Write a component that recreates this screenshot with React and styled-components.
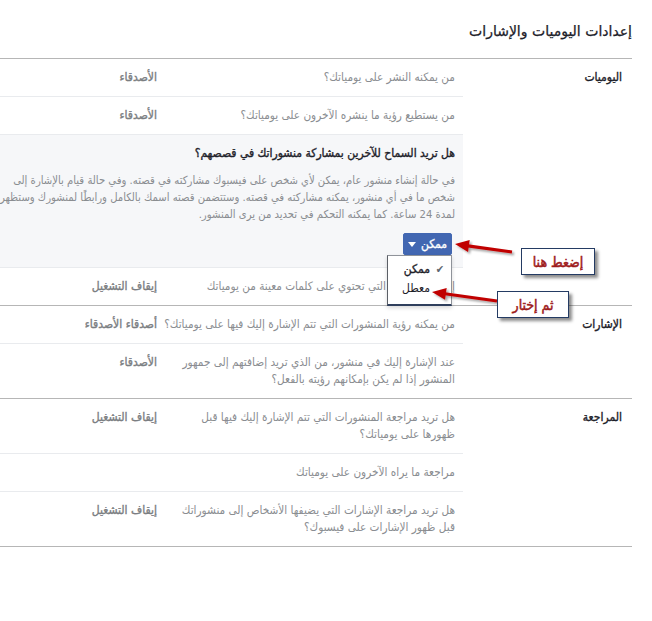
import React from "react";
import styled, { createGlobalStyle, css } from "styled-components";

const GlobalStyle = createGlobalStyle`
  html, body { margin: 0; padding: 0; background: #fff; }
  body {
    direction: rtl;
    font-family: "DejaVu Sans Condensed", "DejaVu Sans", sans-serif;
    font-size: 12px;
    color: #1d2129;
  }
`;

const fauxBold = css`
  font-weight: normal;
  -webkit-text-stroke: 0.35px currentColor;
`;

const Page = styled.div`
  position: relative;
  width: 652px;
  height: 621px;
  overflow: hidden;
  background: #fff;
`;

const Panel = styled.div`
  width: 690px;
  margin-right: 20px;
`;

const Header = styled.div`
  height: 59px;
  display: flex;
  align-items: center;
  padding-top: 3px;
  box-sizing: border-box;
  border-bottom: 1px solid #b6b6b6;
`;

const Title = styled.h2`
  margin: 0;
  font-family: "DejaVu Sans", sans-serif;
  font-size: 14px;
  font-weight: normal;
  -webkit-text-stroke: 0.25px currentColor;
  color: #1d2129;
`;

const Section = styled.div`
  display: flex;
  border-bottom: 1px solid #b6b6b6;
`;

const Label = styled.div`
  width: 169px;
  flex: none;
  box-sizing: border-box;
  padding: 10px 10px 0 10px;
  ${fauxBold};
  line-height: 17px;
  color: #1d2129;
`;

const Content = styled.div`
  flex: 1;
  min-width: 0;
`;

const Row = styled.div`
  display: flex;
  padding: 10px 8px 10px 0;
  line-height: 17px;
  border-bottom: 1px solid #e9ebee;
  &:last-child { border-bottom: none; }
`;

const Question = styled.div`
  width: 280px;
  flex: none;
  font-size: 11.7px;
  color: #8a8d91;
  white-space: nowrap;
`;

const Value = styled.div`
  margin-right: 18px;
  ${fauxBold};
  color: #7b7e82;
  white-space: nowrap;
`;

const Expanded = styled.div`
  background: #f6f7f9;
  padding: 10px 8px 12px 0;
  border-bottom: 1px solid #e9ebee;
`;

const ExpHeading = styled.div`
  ${fauxBold};
  font-size: 12px;
  line-height: 17px;
  color: #1d2129;
`;

const ExpText = styled.div`
  margin-top: 10px;
  font-size: 11.2px;
  line-height: 17px;
  color: #8a8d91;
  white-space: nowrap;
`;

const ButtonWrap = styled.div`
  position: relative;
  margin-top: 10px;
  width: 49px;
  margin-right: 3px;
`;

const SelectButton = styled.div`
  height: 22px;
  width: 49px;
  box-sizing: border-box;
  background: #4267b2;
  border: 1px solid #4267b2;
  border-radius: 2px;
  color: #fff;
  ${fauxBold};
  display: flex;
  align-items: center;
  justify-content: center;
  gap: 5px;
`;

const Caret = styled.span`
  width: 0;
  height: 0;
  border-left: 4px solid transparent;
  border-right: 4px solid transparent;
  border-top: 5px solid #fff;
  margin-top: 1px;
`;

const Menu = styled.div`
  position: absolute;
  top: 22px;
  right: 0;
  width: 65px;
  box-sizing: border-box;
  background: #fff;
  border: 1px solid #8f939a;
  border-left-color: #5b5f66;
  border-bottom: 2px solid #2f3f5c;
  padding: 4px 0 6px;
  box-shadow: 0 2px 4px rgba(0, 0, 0, 0.15);
  z-index: 2;
`;

const MenuItem = styled.div`
  position: relative;
  height: 19px;
  line-height: 19px;
  padding-right: 21px;
  color: #1d2129;
  ${(p) => (p.$selected ? fauxBold : "")};
`;

const Check = styled.span`
  position: absolute;
  right: 7px;
  top: 0;
  font-size: 11px;
  color: #606770;
  -webkit-text-stroke: 0;
`;

const Callout = styled.div`
  position: absolute;
  left: ${(p) => p.$x}px;
  top: ${(p) => p.$y}px;
  width: ${(p) => p.$w}px;
  height: 27px;
  box-sizing: border-box;
  background: #fff;
  border: 1.5px solid #243b63;
  box-shadow: 3px 3px 3px rgba(0, 0, 0, 0.45);
  display: flex;
  align-items: center;
  justify-content: center;
  font-size: 14px;
  font-weight: normal;
  -webkit-text-stroke: 0.5px currentColor;
  color: #9e1b1b;
  z-index: 4;
`;

const ArrowLayer = styled.svg`
  position: absolute;
  left: 0;
  top: 0;
  width: 652px;
  height: 621px;
  pointer-events: none;
  z-index: 3;
`;

const Lines = ({ lines }) =>
  lines.map((l, i) => (
    <React.Fragment key={i}>
      {i > 0 && <br />}
      {l}
    </React.Fragment>
  ));

const SettingRow = ({ q, v }) => (
  <Row>
    <Question>
      <Lines lines={Array.isArray(q) ? q : [q]} />
    </Question>
    <Value>{v}</Value>
  </Row>
);

const Arrow = ({ tip, tail }) => {
  const dx = tail[0] - tip[0];
  const dy = tail[1] - tip[1];
  const len = Math.hypot(dx, dy);
  const ux = dx / len;
  const uy = dy / len;
  const hl = 14;
  const hw = 6;
  const bx = tip[0] + ux * hl;
  const by = tip[1] + uy * hl;
  const px = -uy;
  const py = ux;
  const pts = `${tip[0]},${tip[1]} ${bx + px * hw},${by + py * hw} ${bx - px * hw},${by - py * hw}`;
  return (
    <g>
      <line x1={bx - ux} y1={by - uy} x2={tail[0]} y2={tail[1]} stroke="#c00000" strokeWidth="3.2" />
      <polygon points={pts} fill="#c00000" />
    </g>
  );
};

export default function App() {
  return (
    <>
      <GlobalStyle />
      <Page>
        <Panel>
          <Header>
            <Title>إعدادات اليوميات والإشارات</Title>
          </Header>

          <Section>
            <Label>اليوميات</Label>
            <Content>
              <SettingRow q="من يمكنه النشر على يومياتك؟" v="الأصدقاء" />
              <SettingRow q="من يستطيع رؤية ما ينشره الآخرون على يومياتك؟" v="الأصدقاء" />
              <Expanded>
                <ExpHeading>هل تريد السماح للآخرين بمشاركة منشوراتك في قصصهم؟</ExpHeading>
                <ExpText>
                  <Lines
                    lines={[
                      "في حالة إنشاء منشور عام، يمكن لأي شخص على فيسبوك مشاركته في قصته. وفي حالة قيام بالإشارة إلى",
                      "شخص ما في أي منشور، يمكنه مشاركته في قصته. وستتضمن قصته اسمك بالكامل ورابطًا لمنشورك وستظهر",
                      "لمدة 24 ساعة. كما يمكنه التحكم في تحديد من يرى المنشور.",
                    ]}
                  />
                </ExpText>
                <ButtonWrap>
                  <SelectButton>
                    <span>ممكن</span>
                    <Caret />
                  </SelectButton>
                  <Menu>
                    <MenuItem $selected>
                      <Check>✔</Check>
                      ممكن
                    </MenuItem>
                    <MenuItem>معطل</MenuItem>
                  </Menu>
                </ButtonWrap>
              </Expanded>
              <SettingRow q="إخفاء التعليقات التي تحتوي على كلمات معينة من يومياتك" v="إيقاف التشغيل" />
            </Content>
          </Section>

          <Section>
            <Label>الإشارات</Label>
            <Content>
              <SettingRow q="من يمكنه رؤية المنشورات التي تتم الإشارة إليك فيها على يومياتك؟" v="أصدقاء الأصدقاء" />
              <SettingRow
                q={[
                  "عند الإشارة إليك في منشور، من الذي تريد إضافتهم إلى جمهور",
                  "المنشور إذا لم يكن بإمكانهم رؤيته بالفعل؟",
                ]}
                v="الأصدقاء"
              />
            </Content>
          </Section>

          <Section>
            <Label>المراجعة</Label>
            <Content>
              <SettingRow
                q={[
                  "هل تريد مراجعة المنشورات التي تتم الإشارة إليك فيها قبل",
                  "ظهورها على يومياتك؟",
                ]}
                v="إيقاف التشغيل"
              />
              <SettingRow q="مراجعة ما يراه الآخرون على يومياتك" v="" />
              <SettingRow
                q={[
                  "هل تريد مراجعة الإشارات التي يضيفها الأشخاص إلى منشوراتك",
                  "قبل ظهور الإشارات على فيسبوك؟",
                ]}
                v="إيقاف التشغيل"
              />
            </Content>
          </Section>
        </Panel>

        <ArrowLayer viewBox="0 0 652 621">
          <defs>
            <filter id="sh" x="-20%" y="-50%" width="140%" height="200%">
              <feDropShadow dx="2" dy="2" stdDeviation="1.2" floodColor="#000" floodOpacity="0.35" />
            </filter>
          </defs>
          <g filter="url(#sh)">
            <Arrow tip={[455, 244]} tail={[512, 252]} />
            <Arrow tip={[432, 292]} tail={[497, 301]} />
          </g>
        </ArrowLayer>

        <Callout $x={521} $y={248} $w={74}>إضغط هنا</Callout>
        <Callout $x={497} $y={291} $w={72}>ثم إختار</Callout>
      </Page>
    </>
  );
}
